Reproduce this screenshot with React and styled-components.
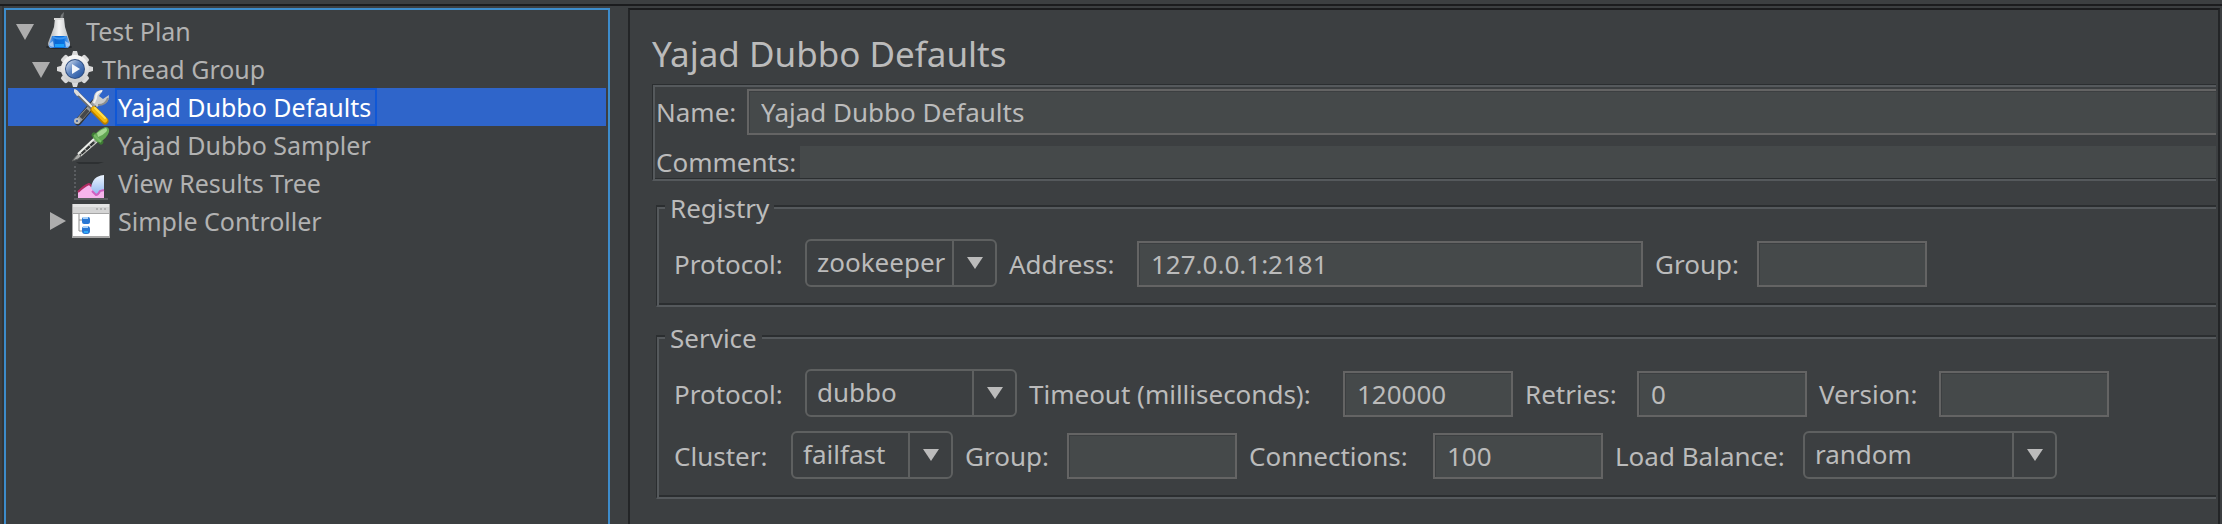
import React, { useId } from "react";
import styled, { createGlobalStyle } from "styled-components";

const GlobalStyle = createGlobalStyle`
  * { box-sizing: border-box; }
  body {
    margin: 0;
    background: #3c3f41;
    color: #bbbbbb;
    font-family: "Noto Sans", "Open Sans", sans-serif;
    font-size: 26px;
  }
`;

const Window = styled.div`
  display: flex;
  flex-direction: column;
  min-height: 100vh;
`;

const TopEdge = styled.div`
  height: 6px;
  border-bottom: 2px solid #1b1c1e;
`;

const SplitPane = styled.div`
  flex: 1;
  display: flex;
  gap: 18px;
  margin-left: 2px;
  padding-right: 2px;
  border-left: 2px solid #323537;
`;

/* ---- tree ---- */

const Tree = styled.ul`
  flex: 0 0 606px;
  margin: 2px 0 0;
  padding: 2px;
  list-style: none;
  border: 2px solid #3d8ccb;
  border-bottom: 0;
  font-size: 25px;
  color: #b2b2b2;
`;

const TreeRow = styled.li`
  display: flex;
  align-items: center;
  height: 38px;
  padding-left: ${(p) => 6 + p.$level * 16}px;
  background: ${(p) => (p.$selected ? "#2f65ca" : "transparent")};
  color: ${(p) => (p.$selected ? "#ffffff" : "inherit")};
`;

const Toggle = styled.button`
  display: flex;
  align-items: center;
  justify-content: center;
  width: 22px;
  height: 38px;
  margin-right: 4px;
  padding: 0;
  border: 0;
  background: none;
  color: #adadad;
`;

const ToggleSpace = styled.span`
  width: 26px;
`;

const TreeIcon = styled.svg`
  display: block;
  flex: none;
  width: 38px;
  height: 38px;
`;

const TreeText = styled.span`
  margin-left: 5px;
  padding: 0 4px 0 1px;
  border: 2px solid ${(p) => (p.$selected ? "#0f57d6" : "transparent")};
  line-height: 34px;
  white-space: nowrap;
`;

/* ---- editor ---- */

const Editor = styled.main`
  flex: 1;
  min-width: 0;
  margin-top: 2px;
  padding: 20px 2px 18px 22px;
  border: 2px solid #232527;
  border-top-color: #1b1c1e;
  border-bottom: 0;
`;

const Title = styled.h1`
  margin: 0 0 6px;
  font-size: 35px;
  font-weight: 400;
  line-height: 48px;
`;

const NameBox = styled.div`
  display: flex;
  flex-direction: column;
  gap: 11px;
  padding: 4px 0 1px 1px;
  border: solid #2b2e30;
  border-width: 1px 0 2px 1px;
  border-bottom-color: #55595c;
  box-shadow: inset 2px 2px 0 #55595c, inset 0 -1px 0 #2b2e30;
`;

const NameRow = styled.div`
  display: flex;
  align-items: center;
`;

const Label = styled.label`
  flex: none;
  width: ${(p) => p.$width}px;
  padding-left: 2px;
  line-height: ${(p) => (p.$compact ? 32 : 46)}px;
  white-space: nowrap;
`;

const TextField = styled.input`
  width: ${(p) => p.$width}px;
  height: 46px;
  padding: 0 12px;
  border: 2px solid #646464;
  border-radius: 0;
  outline: 0;
  background: #45494a;
  box-shadow: inset 1px 1px 0 #3c3f41;
  color: inherit;
  font: inherit;
`;

const NameField = styled(TextField)`
  flex: 1;
  min-width: 0;
  border-right: 0;
`;

const CommentsField = styled(TextField)`
  flex: 1;
  min-width: 0;
  height: 32px;
  border: 0;
  box-shadow: none;
`;

const Section = styled.fieldset`
  min-width: 0;
  margin: 5px 0 9px 4px;
  padding: 13px 0 18px 15px;
  border: solid #2b2e30;
  border-width: 2px 0 2px 1px;
  border-bottom-color: #55595c;
  box-shadow: inset 2px 2px 0 #55595c, inset 0 -2px 0 #2b2e30;
`;

const Legend = styled.legend`
  margin-left: -7px;
  padding: 4px 5px 0;
  background: #3c3f41;
  line-height: 36px;
`;

const Rows = styled.div`
  display: flex;
  flex-direction: column;
  gap: 14px;
`;

const FieldRow = styled.div`
  display: flex;
  align-items: flex-end;
  gap: 10px;
`;

const Combo = styled.div`
  display: grid;
  grid-template-columns: 1fr 45px;
  width: ${(p) => p.$width}px;
  height: 48px;
`;

const ComboSelect = styled.select`
  grid-area: 1 / 1 / 2 / 3;
  width: 100%;
  height: 48px;
  padding: 0 45px 2px 10px;
  appearance: none;
  border: 2px solid #5e6060;
  border-radius: 6px;
  outline: 0;
  background: #3c3f41;
  color: inherit;
  font: inherit;
`;

const ComboArrow = styled.span`
  grid-area: 1 / 2 / 2 / 3;
  display: flex;
  align-items: center;
  justify-content: center;
  padding-right: 2px;
  border-left: 2px solid #5e6060;
  color: #bbbbbb;
  pointer-events: none;
`;

function Field({ label, labelWidth, width, value = "" }) {
  const id = useId();
  return (
    <>
      <Label htmlFor={id} $width={labelWidth}>{label}</Label>
      <TextField id={id} $width={width} defaultValue={value} />
    </>
  );
}

function Choice({ label, labelWidth, width, options }) {
  const id = useId();
  return (
    <>
      <Label htmlFor={id} $width={labelWidth}>{label}</Label>
      <Combo $width={width}>
        <ComboSelect id={id} defaultValue={options[0]}>
          {options.map((o) => <option key={o}>{o}</option>)}
        </ComboSelect>
        <ComboArrow aria-hidden="true">
          <svg width="16" height="12"><path d="M0 0h16L8 12z" fill="currentColor" /></svg>
        </ComboArrow>
      </Combo>
    </>
  );
}

/* ---- tree icons ---- */

const FlaskIcon = () => (
  <TreeIcon viewBox="0 0 38 38">
    <defs>
      <linearGradient id="glass"><stop offset="0" stopColor="#a9acae" /><stop offset=".5" stopColor="#f4f4f4" /><stop offset="1" stopColor="#b9bcbe" /></linearGradient>
      <linearGradient id="liquid"><stop offset="0" stopColor="#7fb2ee" /><stop offset=".3" stopColor="#0d66d0" /><stop offset=".7" stopColor="#0a72e2" /><stop offset="1" stopColor="#8ab6ea" /></linearGradient>
    </defs>
    <ellipse cx="19" cy="35" rx="13" ry="2" fill="#25282b" />
    <path d="M20 7l1-4 3-3-1 7z" fill="#75787a" />
    <path d="M15 6h9l1 9 5 16q0 4-3 5H11q-3-1-3-5l6-16z" fill="url(#glass)" />
    <path d="M12 24h15l3 8q0 3-3 4H11q-3-1-2-4z" fill="url(#liquid)" />
    <path d="M13 24q6 3 13 0v2q-6 3-13 0z" fill="#3f97f0" />
    <path d="M15 32h9v3h-9z" fill="#1ca0fb" />
    <path d="M9 32q1 3 5 3l-1-6zM30 32q-1 3-4 3l-1-6z" fill="#bcd4f4" opacity=".8" />
    <path d="M14 6h10v2H14z" fill="#d9d9d9" />
  </TreeIcon>
);

const GearIcon = () => (
  <TreeIcon viewBox="0 0 38 38">
    <defs>
      <linearGradient id="gearFace" x2="0" y2="1"><stop offset="0" stopColor="#fafafa" /><stop offset="1" stopColor="#c9c9c9" /></linearGradient>
      <linearGradient id="gearHub" x1="0" y1="0" x2="1" y2="1"><stop offset="0" stopColor="#dde5f0" /><stop offset=".45" stopColor="#5f86c2" /><stop offset="1" stopColor="#1d4e9c" /></linearGradient>
    </defs>
    <g fill="#d9d9d9">
      <path d="M15 8l2-7h4l2 7zM15 30l2 7h4l2-7zM8 15l-7 2v4l7 2zM30 15l7 2v4l-7 2z" />
      <rect x="15" y="2" width="8" height="34" rx="2" transform="rotate(45 19 19)" />
      <rect x="15" y="2" width="8" height="34" rx="2" transform="rotate(-45 19 19)" />
    </g>
    <circle cx="19" cy="19" r="14" fill="url(#gearFace)" />
    <circle cx="19" cy="19" r="10" fill="#304f82" />
    <circle cx="19" cy="19" r="9" fill="url(#gearHub)" />
    <path d="M16 14l8 5-8 5z" fill="#f3f6fb" />
  </TreeIcon>
);

const ToolsIcon = () => (
  <TreeIcon viewBox="0 0 38 38">
    <path d="M22 15L6 34" stroke="#343637" strokeWidth="7" strokeLinecap="round" />
    <path d="M24 13L6 33" stroke="#9a9d9d" strokeWidth="5" strokeLinecap="round" />
    <path d="M16 22L9 30" stroke="#45484a" strokeWidth="4" />
    <circle cx="5" cy="33" r="3" fill="#b9bcbd" />
    <circle cx="5" cy="33" r="1" fill="#2f55a0" />
    <path d="M31 2q-8 0-9 6 0 3-2 6l5 5q3-3 6-3 6-1 6-9l-6 4-4-3z" fill="#c9cbcb" />
    <path d="M30 3q-6 1-6 7l-2 5" stroke="#f2f2f2" strokeWidth="2" fill="none" />
    <path d="M26 17q8 0 10-7" stroke="#8b8e8f" strokeWidth="2" fill="none" />
    <path d="M4 4L20 20" stroke="#6b6e70" strokeWidth="4" strokeLinecap="round" />
    <path d="M3 2L20 19" stroke="#f0f0f0" strokeWidth="2" />
    <path d="M2 1l4 2 2 4-3 1-3-4z" fill="#dcdcdc" />
    <path d="M22 22L33 33" stroke="#b77d00" strokeWidth="7" strokeLinecap="round" />
    <path d="M22 21L33 32" stroke="#f5b90a" strokeWidth="5" strokeLinecap="round" />
    <path d="M23 20L33 30" stroke="#ffdf4d" strokeWidth="2" strokeLinecap="round" />
  </TreeIcon>
);

const PipetteIcon = () => (
  <TreeIcon viewBox="0 0 38 38">
    <path d="M4 36h28l-6 2H7z" fill="#2d3032" />
    <path d="M23 12L5 29l-5 6 6-2 20-17z" fill="#a9aaa8" stroke="#5c5e5d" strokeWidth="1" />
    <path d="M22 16L8 29" stroke="#343737" strokeWidth="3" strokeDasharray="5 1" />
    <path d="M23 12L6 28" stroke="#eceeea" strokeWidth="2" />
    <path d="M25 16L9 30" stroke="#d4d6d2" strokeWidth="1" />
    <path d="M22 9l7 7" stroke="#3d7a33" strokeWidth="5" strokeLinecap="round" />
    <path d="M23 8q5-5 10-7 5 0 4 5-2 6-9 10l-3 0-4-4z" fill="#62a753" />
    <path d="M25 7q5-4 9-5 2 2 0 4-4 4-8 5z" fill="#a5d894" />
    <path d="M22 9l7 7" stroke="#77ba66" strokeWidth="2" />
  </TreeIcon>
);

const ChartIcon = () => (
  <TreeIcon viewBox="0 0 38 38">
    <defs>
      <linearGradient id="area" x2="0" y2="1"><stop offset="0" stopColor="#eef5ff" /><stop offset="1" stopColor="#8fb6ee" /></linearGradient>
    </defs>
    <path d="M3 2v34" stroke="#5a5d60" strokeWidth="2" strokeDasharray="2 2" />
    <path d="M2 35h34" stroke="#5a5d60" strokeWidth="2" />
    <path d="M6 34V28q6-6 11-8 4 2 6 6l9-1v9z" fill="#f6b4ec" />
    <path d="M6 28q6-6 11-8 2 1 3 3" stroke="#b02d63" strokeWidth="2" fill="none" />
    <path d="M19 24q1-8 6-11 4-2 7-2v14q-3 2-5 5l-3 1z" fill="url(#area)" />
    <path d="M20 27l4 4q2 0 4-4l4-1" stroke="#d05fc0" strokeWidth="2" fill="none" />
  </TreeIcon>
);

const ControllerIcon = () => (
  <TreeIcon viewBox="0 0 38 38">
    <path d="M0 2h38v34H0z" fill="#a6a6a6" />
    <path d="M1 2h36v9H1z" fill="#d4d4d4" />
    <path d="M1 2h36v3H1z" fill="#e4e4e4" />
    <path d="M24 7h2m2 0h2m2 0h2" stroke="#b2b2b2" strokeWidth="2" />
    <path d="M1 12h36v22H1z" fill="#ffffff" />
    <path d="M7 12v17h4M7 18h4" stroke="#8f8f8f" strokeWidth="1" fill="none" />
    <rect x="10" y="15" width="8" height="7" rx="2" fill="#2877d4" />
    <rect x="10" y="24" width="8" height="8" rx="3" fill="#2877d4" />
    <path d="M11 16h5M11 25h5" stroke="#a9d1f8" strokeWidth="2" />
    <path d="M12 30h4" stroke="#2fa8f5" strokeWidth="2" />
  </TreeIcon>
);

const NODES = [
  { text: "Test Plan", level: 0, Icon: FlaskIcon, open: true },
  { text: "Thread Group", level: 1, Icon: GearIcon, open: true },
  { text: "Yajad Dubbo Defaults", level: 2, Icon: ToolsIcon, selected: true },
  { text: "Yajad Dubbo Sampler", level: 2, Icon: PipetteIcon },
  { text: "View Results Tree", level: 2, Icon: ChartIcon },
  { text: "Simple Controller", level: 2, Icon: ControllerIcon, open: false },
];

function TreeNode({ text, level, Icon, open, selected }) {
  return (
    <TreeRow role="treeitem" aria-level={level + 1} aria-expanded={open} aria-selected={!!selected} $level={level} $selected={selected}>
      {open === undefined ? (
        <ToggleSpace />
      ) : (
        <Toggle type="button" aria-label={open ? "Collapse" : "Expand"}>
          <svg width="18" height="18" aria-hidden="true">
            <path d={open ? "M0 2h18L9 18z" : "M2 0v18l16-9z"} fill="currentColor" />
          </svg>
        </Toggle>
      )}
      <Icon />
      <TreeText $selected={selected}>{text}</TreeText>
    </TreeRow>
  );
}

export default function App() {
  return (
    <Window>
      <GlobalStyle />
      <TopEdge />
      <SplitPane>
        <Tree role="tree">
          {NODES.map((n) => <TreeNode key={n.text} {...n} />)}
        </Tree>
        <Editor>
          <Title>Yajad Dubbo Defaults</Title>
          <NameBox>
            <NameRow>
              <Label htmlFor="name" $width={93}>Name:</Label>
              <NameField id="name" defaultValue="Yajad Dubbo Defaults" />
            </NameRow>
            <NameRow>
              <Label htmlFor="comments" $width={146} $compact>Comments:</Label>
              <CommentsField id="comments" />
            </NameRow>
          </NameBox>
          <Section>
            <Legend>Registry</Legend>
            <Rows>
              <FieldRow>
                <Choice label="Protocol:" labelWidth={123} width={192} options={["zookeeper"]} />
                <Field label="Address:" labelWidth={120} width={506} value="127.0.0.1:2181" />
                <Field label="Group:" labelWidth={94} width={170} />
              </FieldRow>
            </Rows>
          </Section>
          <Section>
            <Legend>Service</Legend>
            <Rows>
              <FieldRow>
                <Choice label="Protocol:" labelWidth={123} width={212} options={["dubbo"]} />
                <Field label="Timeout (milliseconds):" labelWidth={306} width={170} value="120000" />
                <Field label="Retries:" labelWidth={104} width={170} value="0" />
                <Field label="Version:" labelWidth={112} width={170} />
              </FieldRow>
              <FieldRow>
                <Choice label="Cluster:" labelWidth={109} width={162} options={["failfast"]} />
                <Field label="Group:" labelWidth={94} width={170} />
                <Field label="Connections:" labelWidth={176} width={170} value="100" />
                <Choice label="Load Balance:" labelWidth={180} width={254} options={["random"]} />
              </FieldRow>
            </Rows>
          </Section>
        </Editor>
      </SplitPane>
    </Window>
  );
}
